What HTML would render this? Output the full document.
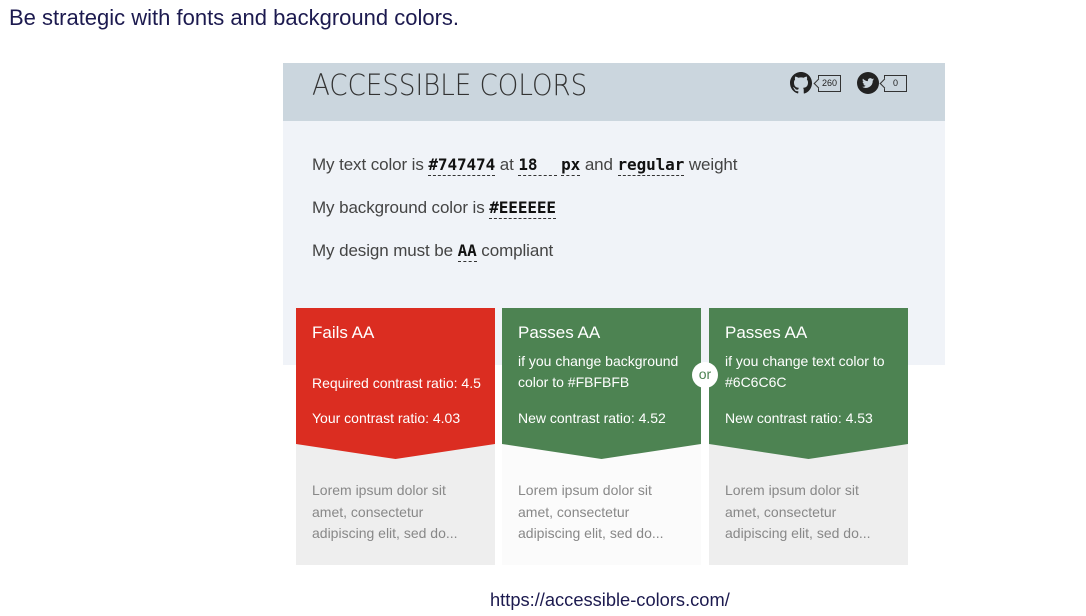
<!DOCTYPE html>
<html><head><meta charset="utf-8"><style>
*{margin:0;padding:0;box-sizing:border-box}
body{width:1086px;height:616px;background:#fff;position:relative;font-family:"Liberation Sans",sans-serif;overflow:hidden}
.t{position:absolute;left:9px;top:5px;font-size:22px;color:#1c1a4f}
.u{position:absolute;left:490px;top:589px;font-size:18.3px;color:#1c1a4f}
.hd{position:absolute;left:283px;top:63px;width:662px;height:58px;background:#cbd6de}
.hd h1{position:absolute;left:29px;top:5px;font-size:29px;color:#333;font-family:"DejaVu Sans","Liberation Sans",sans-serif;font-weight:200;transform:scaleX(0.9);transform-origin:left}
.bd{position:absolute;left:283px;top:121px;width:662px;height:244px;background:#f0f3f8}
.ln{position:absolute;left:312px;font-size:17px;color:#444;letter-spacing:-0.1px}
.m{font-family:"DejaVu Sans Mono","Liberation Mono",monospace;font-weight:bold;color:#111;font-size:16px;border-bottom:1px dashed #333;padding-bottom:1px}
.card{position:absolute;top:308px;width:199px;height:257px;background:#eee}
.top{position:absolute;left:0;top:0;width:199px;height:151px;clip-path:polygon(0 0,100% 0,100% 136px,50% 151px,0 136px)}
.card .h{position:absolute;left:16px;top:15px;font-size:17px;color:#fff}
.card .s{position:absolute;left:16px;font-size:14px;color:#fff;line-height:21px}
.card .l{position:absolute;left:16px;top:172px;font-size:14px;color:#888;line-height:21.5px}
.ic{position:absolute;top:72px;width:22px;height:22px}
.bx{position:absolute;top:75px;height:17px;border:1px solid #333;font-size:9px;line-height:15px;text-align:center;color:#222;background:#cbd6de}
.bx:before{content:"";position:absolute;left:-4px;top:4px;width:6px;height:6px;border-left:1px solid #333;border-bottom:1px solid #333;background:#cbd6de;transform:rotate(45deg)}
.or{position:absolute;left:692px;top:362px;width:26px;height:26px;border-radius:50%;background:#fff;color:#4d8352;font-size:14px;text-align:center;line-height:24px;z-index:3}
</style></head><body>
<div class="t">Be strategic with fonts and background colors.</div>
<div class="hd"><h1>ACCESSIBLE COLORS</h1></div>
<svg class="ic" style="left:790px" viewBox="0 0 16 16"><path fill="#222" d="M8 0C3.58 0 0 3.58 0 8c0 3.54 2.29 6.53 5.47 7.59.4.07.55-.17.55-.38v-1.33c-2.23.48-2.7-1.07-2.7-1.07-.36-.92-.89-1.17-.89-1.17-.73-.5.05-.49.05-.49.8.06 1.23.83 1.23.83.72 1.23 1.87.87 2.33.67.07-.52.28-.87.51-1.07-1.78-.2-3.65-.89-3.65-3.95 0-.87.31-1.59.82-2.15-.08-.2-.36-1.02.08-2.12 0 0 .67-.21 2.2.82.64-.18 1.32-.27 2-.27.68 0 1.36.09 2 .27 1.53-1.04 2.2-.82 2.2-.82.44 1.1.16 1.92.08 2.12.51.56.82 1.27.82 2.15 0 3.07-1.87 3.75-3.65 3.95.29.25.54.73.54 1.48v2.2c0 .21.15.46.55.38A8.013 8.013 0 0016 8c0-4.42-3.58-8-8-8z"/></svg>
<div class="bx" style="left:818px;width:23px">260</div>
<svg class="ic" style="left:857px" viewBox="0 0 22 22"><circle cx="11" cy="11" r="11" fill="#222"/><path fill="#cbd6de" d="M17 7.3c-.45.2-.9.33-1.4.4.5-.3.9-.8 1.1-1.35-.5.3-1 .5-1.55.6a2.45 2.45 0 00-4.2 2.2c-2-.1-3.8-1.05-5-2.55-.7 1.15-.3 2.6.75 3.3-.4 0-.8-.12-1.1-.3 0 1.2.85 2.2 1.95 2.4-.35.1-.75.12-1.1.05.3 1 1.2 1.7 2.3 1.7A4.9 4.9 0 015 14.8a7 7 0 0010.75-6.2c.5-.35.9-.8 1.25-1.3z"/></svg>
<div class="bx" style="left:884px;width:23px">0</div>
<div class="bd"></div>
<div class="ln" style="top:155px">My text color is <span class="m">#747474</span> at <span class="m">18&nbsp;&nbsp;</span> <span class="m">px</span> and <span class="m">regular</span> weight</div>
<div class="ln" style="top:198px">My background color is <span class="m">#EEEEEE</span></div>
<div class="ln" style="top:241px">My design must be <span class="m">AA</span> compliant</div>
<div class="card" style="left:296px"><div class="top" style="background:#db2d21"></div>
<div class="h">Fails AA</div><div class="s" style="top:65px">Required contrast ratio: 4.5</div><div class="s" style="top:100px">Your contrast ratio: 4.03</div>
<div class="l">Lorem ipsum dolor sit<br>amet, consectetur<br>adipiscing elit, sed do...</div></div>
<div class="card" style="left:502px;background:#fbfbfb"><div class="top" style="background:#4d8352"></div>
<div class="h">Passes AA</div><div class="s" style="top:43px">if you change background<br>color to #FBFBFB</div><div class="s" style="top:100px">New contrast ratio: 4.52</div>
<div class="l">Lorem ipsum dolor sit<br>amet, consectetur<br>adipiscing elit, sed do...</div></div>
<div class="card" style="left:709px"><div class="top" style="background:#4d8352"></div>
<div class="h">Passes AA</div><div class="s" style="top:43px">if you change text color to<br>#6C6C6C</div><div class="s" style="top:100px">New contrast ratio: 4.53</div>
<div class="l">Lorem ipsum dolor sit<br>amet, consectetur<br>adipiscing elit, sed do...</div></div>
<div class="or">or</div>
<div class="u">https://accessible-colors.com/</div>
</body></html>
